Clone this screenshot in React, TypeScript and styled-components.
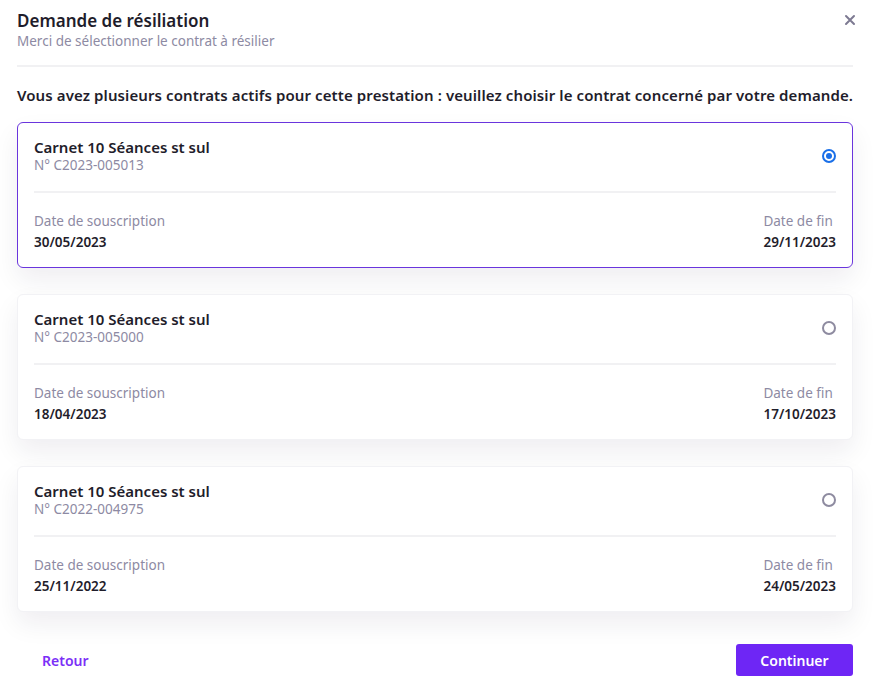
import React, { useState } from "react";
import styled, { createGlobalStyle } from "styled-components";

const GlobalStyle = createGlobalStyle`
  html, body {
    margin: 0;
    padding: 0;
    background: #ffffff;
    font-family: "Noto Sans", "Open Sans", sans-serif;
    color: #1f1d2b;
  }
  * { box-sizing: border-box; }
`;

const Modal = styled.div`
  width: 874px;
  min-height: 689px;
  padding: 10px 21px 13px 17px;
  display: flex;
  flex-direction: column;
`;

const Header = styled.div`
  display: flex;
  justify-content: space-between;
  align-items: flex-start;
  padding-bottom: 15px;
  border-bottom: 2px solid #f1f1f3;
`;

const Titles = styled.div`
  display: flex;
  flex-direction: column;
`;

const Title = styled.h1`
  margin: 0;
  font-size: 17px;
  line-height: 22px;
  font-weight: 600;
  color: #1f1d2b;
`;

const Subtitle = styled.p`
  margin: 0;
  font-size: 13.5px;
  line-height: 18px;
  color: #8d8aa3;
`;

const CloseButton = styled.button`
  border: none;
  background: none;
  padding: 0;
  margin-top: 3px;
  margin-right: -4px;
  cursor: pointer;
  color: #7d7a92;
  display: flex;
`;

const Intro = styled.p`
  margin: 18px 0 17px;
  font-size: 15px;
  line-height: 20px;
  font-weight: 600;
  color: #1f1d2b;
  letter-spacing: 0.1px;
  white-space: nowrap;
`;

const CardList = styled.div`
  display: flex;
  flex-direction: column;
  gap: 26px;
`;

const Card = styled.label<{ $selected: boolean }>`
  display: flex;
  flex-direction: column;
  background: #ffffff;
  border: 1px solid ${(p) => (p.$selected ? "#6a35dd" : "#f2f2f5")};
  border-radius: 6px;
  padding: 15px 16px 16px;
  box-shadow: 0 12px 26px rgba(30, 20, 60, 0.07);
  cursor: pointer;
`;

const CardTop = styled.div`
  display: flex;
  justify-content: space-between;
  align-items: center;
  padding-bottom: 17px;
  border-bottom: 2px solid #f1f1f3;
`;

const ContractName = styled.div`
  font-size: 15px;
  line-height: 18px;
  font-weight: 600;
  color: #1f1d2b;
`;

const ContractNumber = styled.div`
  font-size: 13.5px;
  line-height: 18px;
  color: #8d8aa3;
`;

const Radio = styled.span<{ $checked: boolean }>`
  width: 14px;
  height: 14px;
  border-radius: 50%;
  border: 2px solid ${(p) => (p.$checked ? "#1a6fe8" : "#8e8ba0")};
  display: flex;
  align-items: center;
  justify-content: center;
  &::after {
    content: "";
    width: 6px;
    height: 6px;
    border-radius: 50%;
    background: ${(p) => (p.$checked ? "#1a6fe8" : "transparent")};
  }
`;

const Dates = styled.div`
  display: flex;
  justify-content: space-between;
  padding-top: 19px;
`;

const DateBlock = styled.div`
  display: flex;
  flex-direction: column;
  gap: 3px;
`;

const DateLabel = styled.span`
  font-size: 13.5px;
  line-height: 18px;
  color: #8d8aa3;
`;

const DateValue = styled.span`
  font-size: 13.5px;
  line-height: 18px;
  font-weight: 600;
  color: #1f1d2b;
`;

const Footer = styled.div`
  display: flex;
  justify-content: space-between;
  align-items: center;
  margin-top: auto;
  padding-left: 25px;
`;

const BackLink = styled.button`
  border: none;
  background: none;
  padding: 0;
  font-family: inherit;
  font-size: 14px;
  font-weight: 600;
  color: #7b2ff7;
  cursor: pointer;
`;

const PrimaryButton = styled.button`
  width: 117px;
  height: 32px;
  border: none;
  border-radius: 3px;
  background: #6e26f5;
  color: #ffffff;
  font-family: inherit;
  font-size: 14px;
  font-weight: 600;
  cursor: pointer;
`;

const contracts = [
  { id: "C2023-005013", name: "Carnet 10 Séances st sul", start: "30/05/2023", end: "29/11/2023" },
  { id: "C2023-005000", name: "Carnet 10 Séances st sul", start: "18/04/2023", end: "17/10/2023" },
  { id: "C2022-004975", name: "Carnet 10 Séances st sul", start: "25/11/2022", end: "24/05/2023" },
];

const App: React.FC = () => {
  const [selected, setSelected] = useState(contracts[0].id);

  return (
    <>
      <GlobalStyle />
      <Modal>
        <Header>
          <Titles>
            <Title>Demande de résiliation</Title>
            <Subtitle>Merci de sélectionner le contrat à résilier</Subtitle>
          </Titles>
          <CloseButton aria-label="Fermer">
            <svg width="14" height="14" viewBox="0 0 14 14">
              <path d="M3 3 L11 11 M11 3 L3 11" stroke="currentColor" strokeWidth="2" strokeLinecap="round" />
            </svg>
          </CloseButton>
        </Header>

        <Intro>
          Vous avez plusieurs contrats actifs pour cette prestation : veuillez choisir le contrat concerné par votre demande.
        </Intro>

        <CardList>
          {contracts.map((c) => (
            <Card key={c.id} $selected={selected === c.id} onClick={() => setSelected(c.id)}>
              <CardTop>
                <div>
                  <ContractName>{c.name}</ContractName>
                  <ContractNumber>N° {c.id}</ContractNumber>
                </div>
                <Radio $checked={selected === c.id} />
              </CardTop>
              <Dates>
                <DateBlock>
                  <DateLabel>Date de souscription</DateLabel>
                  <DateValue>{c.start}</DateValue>
                </DateBlock>
                <DateBlock>
                  <DateLabel>Date de fin</DateLabel>
                  <DateValue>{c.end}</DateValue>
                </DateBlock>
              </Dates>
            </Card>
          ))}
        </CardList>

        <Footer>
          <BackLink>Retour</BackLink>
          <PrimaryButton>Continuer</PrimaryButton>
        </Footer>
      </Modal>
    </>
  );
};

export default App;
